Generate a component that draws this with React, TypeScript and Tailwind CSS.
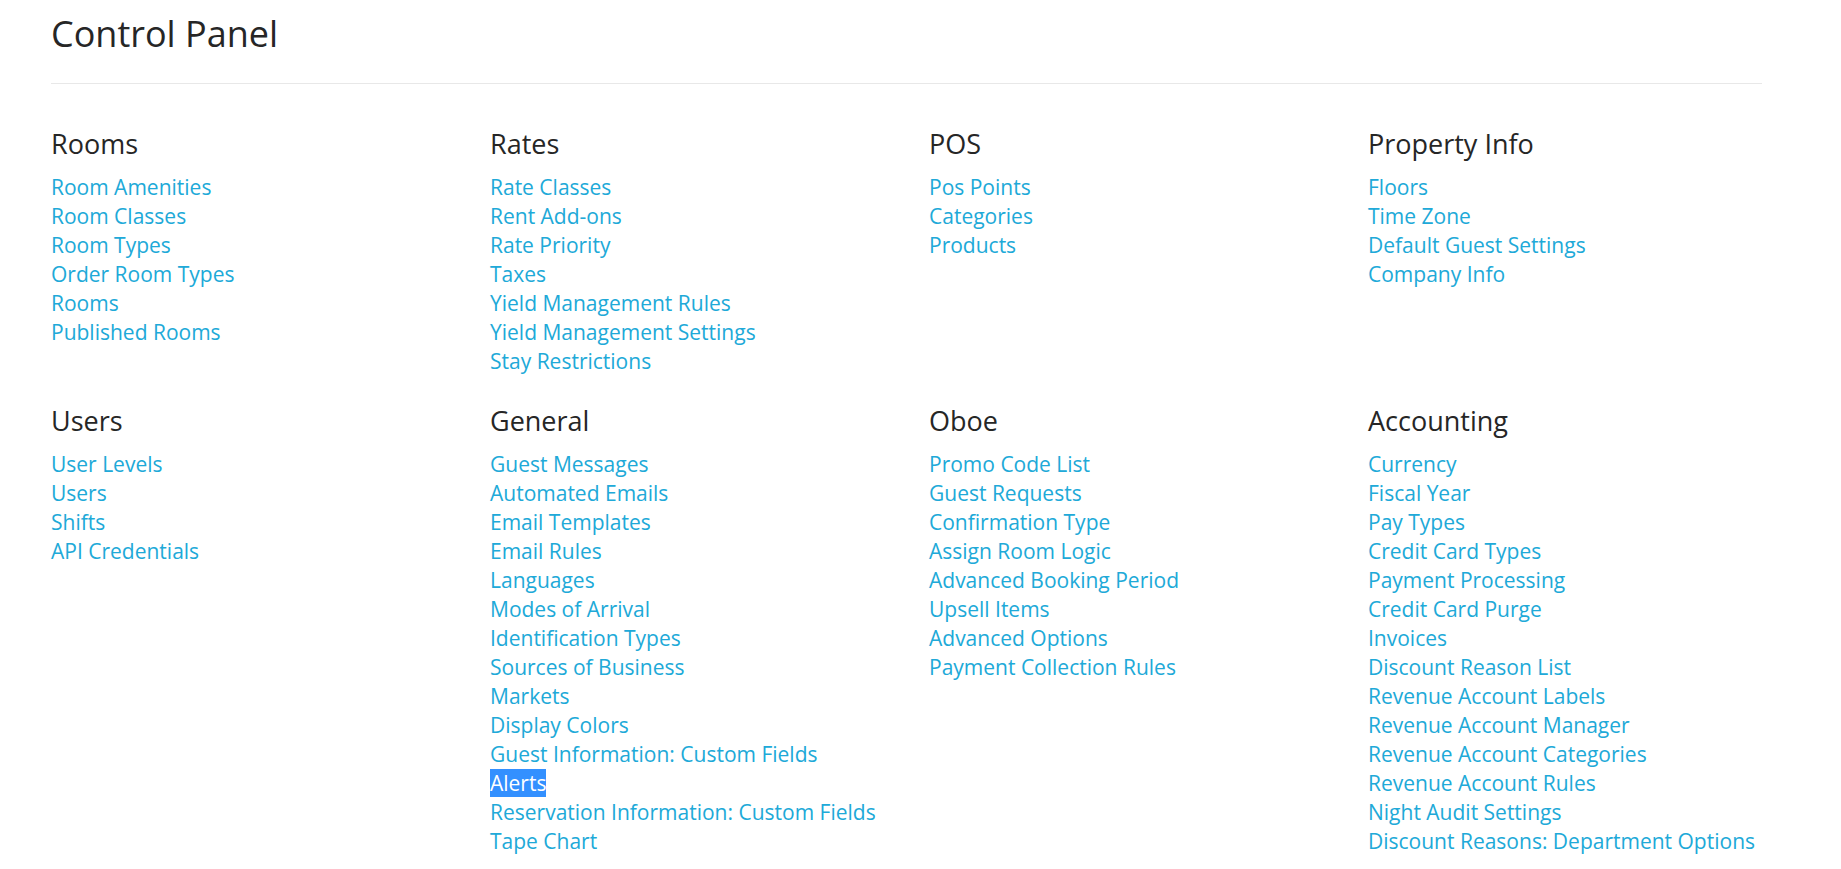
const sections = [
  {
    title: "Rooms",
    links: ["Room Amenities", "Room Classes", "Room Types", "Order Room Types", "Rooms", "Published Rooms"],
  },
  {
    title: "Rates",
    links: [
      "Rate Classes",
      "Rent Add-ons",
      "Rate Priority",
      "Taxes",
      "Yield Management Rules",
      "Yield Management Settings",
      "Stay Restrictions",
    ],
  },
  {
    title: "POS",
    links: ["Pos Points", "Categories", "Products"],
  },
  {
    title: "Property Info",
    links: ["Floors", "Time Zone", "Default Guest Settings", "Company Info"],
  },
  {
    title: "Users",
    links: ["User Levels", "Users", "Shifts", "API Credentials"],
  },
  {
    title: "General",
    links: [
      "Guest Messages",
      "Automated Emails",
      "Email Templates",
      "Email Rules",
      "Languages",
      "Modes of Arrival",
      "Identification Types",
      "Sources of Business",
      "Markets",
      "Display Colors",
      "Guest Information: Custom Fields",
      "Alerts",
      "Reservation Information: Custom Fields",
      "Tape Chart",
    ],
  },
  {
    title: "Oboe",
    links: [
      "Promo Code List",
      "Guest Requests",
      "Confirmation Type",
      "Assign Room Logic",
      "Advanced Booking Period",
      "Upsell Items",
      "Advanced Options",
      "Payment Collection Rules",
    ],
  },
  {
    title: "Accounting",
    links: [
      "Currency",
      "Fiscal Year",
      "Pay Types",
      "Credit Card Types",
      "Payment Processing",
      "Credit Card Purge",
      "Invoices",
      "Discount Reason List",
      "Revenue Account Labels",
      "Revenue Account Manager",
      "Revenue Account Categories",
      "Revenue Account Rules",
      "Night Audit Settings",
      "Discount Reasons: Department Options",
    ],
  },
]

export default function App() {
  return (
    <div className="min-h-screen bg-white px-[51px] pt-[14px] font-['Open_Sans',sans-serif]">
      <div className="w-[1711px]">
        <h1 className="text-[36px] leading-[39.6px] font-normal text-[#262626]">Control Panel</h1>
        <hr className="mt-[29px] border-0 border-t border-[#e8e8e8]" />
      </div>

      <div className="mt-[45px] grid grid-cols-[repeat(4,439px)] gap-y-[30px]">
        {sections.map((section) => (
          <div key={section.title}>
            <h3 className="text-[27px] leading-[30px] font-normal text-[#262626]">{section.title}</h3>
            <ul className="mt-[14px]">
              {section.links.map((link) => (
                <li key={link} className="text-[21px] leading-[29px]">
                  <a
                    href="#"
                    className={
                      link === "Alerts"
                        ? "bg-[#3390ff] text-white"
                        : "text-[#20a9d8] hover:underline"
                    }
                  >
                    {link}
                  </a>
                </li>
              ))}
            </ul>
          </div>
        ))}
      </div>
    </div>
  )
}
